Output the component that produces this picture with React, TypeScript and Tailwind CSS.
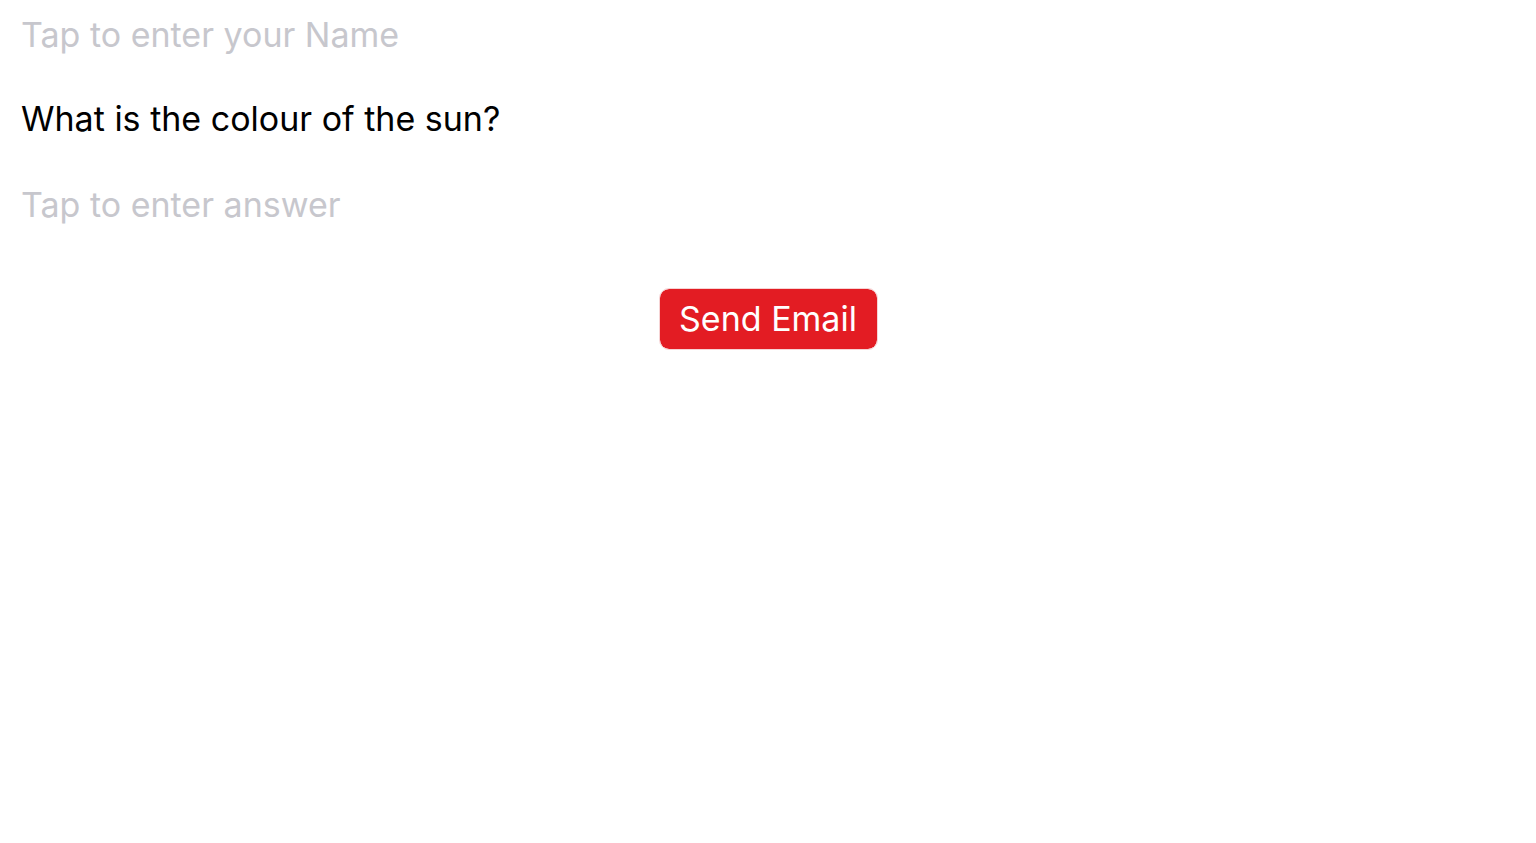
import { useState } from 'react'

export default function App() {
  const [name, setName] = useState('')
  const [answer, setAnswer] = useState('')

  return (
    <div className="min-h-screen bg-white font-['Inter','Liberation_Sans',sans-serif]">
      <div className="flex flex-col px-[21px]">
        <input
          value={name}
          onChange={(e) => setName(e.target.value)}
          placeholder="Tap to enter your Name"
          className="h-[68px] text-[34px] text-black placeholder:text-[#c7c7cd] outline-none bg-transparent"
        />
        <p className="h-[100px] flex items-center text-[34px] text-black">What is the colour of the sun?</p>
        <input
          value={answer}
          onChange={(e) => setAnswer(e.target.value)}
          placeholder="Tap to enter answer"
          className="h-[72px] text-[34px] text-black placeholder:text-[#c7c7cd] outline-none bg-transparent"
        />
      </div>
      <div className="flex justify-center mt-[48px]">
        <button className="w-[219px] h-[62px] rounded-[10px] bg-[#e31c23] bg-clip-padding border border-[#f6d3d4] text-white text-[34px] leading-none">
          Send Email
        </button>
      </div>
    </div>
  )
}
